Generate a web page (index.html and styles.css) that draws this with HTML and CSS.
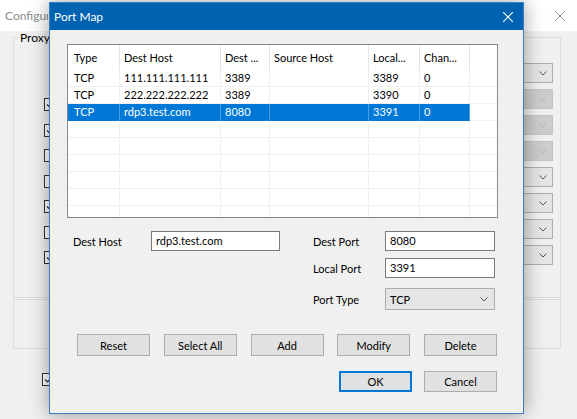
FILE: index.html
```html
<!DOCTYPE html>
<html>
<head>
<meta charset="utf-8">
<title>Port Map</title>
<link rel="stylesheet" href="styles.css">
</head>
<body>
<div class="bgwin">
  <div class="bg-title">
    <span class="bg-title-text">Configuration</span>
    <svg class="bg-close" width="10" height="10" viewBox="0 0 10 10"><path d="M0 0L10 10M10 0L0 10" stroke="#8c8c8c" stroke-width="1" fill="none"/></svg>
  </div>
  <div class="bg-body">
    <fieldset class="group">
      <legend>Proxy</legend>
      <div class="group-inner">
        <div class="checks">
          <span class="cb"><svg width="11" height="11" viewBox="0 0 11 11"><path d="M2 5.5L4.5 8L9 3" stroke="#333" stroke-width="1.2" fill="none"/></svg></span>
          <span class="cb"><svg width="11" height="11" viewBox="0 0 11 11"><path d="M2 5.5L4.5 8L9 3" stroke="#333" stroke-width="1.2" fill="none"/></svg></span>
          <span class="cb"></span>
          <span class="cb"></span>
          <span class="cb"><svg width="11" height="11" viewBox="0 0 11 11"><path d="M2 5.5L4.5 8L9 3" stroke="#333" stroke-width="1.2" fill="none"/></svg></span>
          <span class="cb"></span>
          <span class="cb"><svg width="11" height="11" viewBox="0 0 11 11"><path d="M2 5.5L4.5 8L9 3" stroke="#333" stroke-width="1.2" fill="none"/></svg></span>
        </div>
        <div class="combos">
          <span class="combo"><svg width="8" height="5" viewBox="0 0 8 5"><path d="M0.5 0.5L4 4L7.5 0.5" stroke="#555" fill="none"/></svg></span>
          <span class="combo off"><svg width="8" height="5" viewBox="0 0 8 5"><path d="M0.5 0.5L4 4L7.5 0.5" stroke="#b5b5b5" fill="none"/></svg></span>
          <span class="combo off"><svg width="8" height="5" viewBox="0 0 8 5"><path d="M0.5 0.5L4 4L7.5 0.5" stroke="#b5b5b5" fill="none"/></svg></span>
          <span class="combo off"><svg width="8" height="5" viewBox="0 0 8 5"><path d="M0.5 0.5L4 4L7.5 0.5" stroke="#b5b5b5" fill="none"/></svg></span>
          <span class="combo"><svg width="8" height="5" viewBox="0 0 8 5"><path d="M0.5 0.5L4 4L7.5 0.5" stroke="#555" fill="none"/></svg></span>
          <span class="combo"><svg width="8" height="5" viewBox="0 0 8 5"><path d="M0.5 0.5L4 4L7.5 0.5" stroke="#555" fill="none"/></svg></span>
          <span class="combo"><svg width="8" height="5" viewBox="0 0 8 5"><path d="M0.5 0.5L4 4L7.5 0.5" stroke="#555" fill="none"/></svg></span>
          <span class="combo"><svg width="8" height="5" viewBox="0 0 8 5"><path d="M0.5 0.5L4 4L7.5 0.5" stroke="#555" fill="none"/></svg></span>
        </div>
      </div>
    </fieldset>
    <div class="group2"></div>
    <span class="cb bottom-cb"><svg width="11" height="11" viewBox="0 0 11 11"><path d="M2 5.5L4.5 8L9 3" stroke="#333" stroke-width="1.2" fill="none"/></svg></span>
  </div>
</div>

<div class="dialog">
  <div class="dlg-title">
    <span>Port Map</span>
    <svg class="dlg-close" width="10" height="10" viewBox="0 0 10 10"><path d="M0 0L10 10M10 0L0 10" stroke="#fff" stroke-width="1.1" fill="none"/></svg>
  </div>
  <div class="dlg-body">
    <div class="list">
      <div class="lv-row lv-head">
        <div class="c">Type</div><div class="c">Dest Host</div><div class="c">Dest ...</div><div class="c">Source Host</div><div class="c">Local...</div><div class="c">Chan...</div><div class="c"></div>
      </div>
      <div class="lv-row">
        <div class="c">TCP</div><div class="c">111.111.111.111</div><div class="c">3389</div><div class="c"></div><div class="c">3389</div><div class="c">0</div><div class="c"></div>
      </div>
      <div class="lv-row">
        <div class="c">TCP</div><div class="c">222.222.222.222</div><div class="c">3389</div><div class="c"></div><div class="c">3390</div><div class="c">0</div><div class="c"></div>
      </div>
      <div class="lv-row sel">
        <div class="c">TCP</div><div class="c">rdp3.test.com</div><div class="c">8080</div><div class="c"></div><div class="c">3391</div><div class="c">0</div><div class="c"></div>
      </div>
      <div class="lv-row"><div class="c"></div><div class="c"></div><div class="c"></div><div class="c"></div><div class="c"></div><div class="c"></div><div class="c"></div></div>
      <div class="lv-row"><div class="c"></div><div class="c"></div><div class="c"></div><div class="c"></div><div class="c"></div><div class="c"></div><div class="c"></div></div>
      <div class="lv-row"><div class="c"></div><div class="c"></div><div class="c"></div><div class="c"></div><div class="c"></div><div class="c"></div><div class="c"></div></div>
      <div class="lv-row"><div class="c"></div><div class="c"></div><div class="c"></div><div class="c"></div><div class="c"></div><div class="c"></div><div class="c"></div></div>
      <div class="lv-row"><div class="c"></div><div class="c"></div><div class="c"></div><div class="c"></div><div class="c"></div><div class="c"></div><div class="c"></div></div>
      <div class="lv-row"><div class="c"></div><div class="c"></div><div class="c"></div><div class="c"></div><div class="c"></div><div class="c"></div><div class="c"></div></div>
    </div>

    <div class="form">
      <label class="lbl">Dest Host</label>
      <div class="input">rdp3.test.com</div>
      <div></div>
      <label class="lbl">Dest Port</label>
      <div class="input">8080</div>

      <div></div><div></div><div></div>
      <label class="lbl">Local Port</label>
      <div class="input">3391</div>

      <div></div><div></div><div></div>
      <label class="lbl r3">Port Type</label>
      <div class="select r3"><span>TCP</span><svg width="8" height="5" viewBox="0 0 8 5"><path d="M0.5 0.5L4 4L7.5 0.5" stroke="#555" fill="none"/></svg></div>
    </div>

    <div class="btns">
      <div class="btn">Reset</div>
      <div class="btn">Select All</div>
      <div class="btn">Add</div>
      <div class="btn">Modify</div>
      <div class="btn">Delete</div>
    </div>
    <div class="btns2">
      <div class="btn ok">OK</div>
      <div class="btn">Cancel</div>
    </div>
  </div>
</div>
</body>
</html>
```

FILE: styles.css
```css
* { box-sizing: border-box; }

body {
  margin: 0;
  width: 577px;
  height: 419px;
  overflow: hidden;
  position: relative;
  background: #f0f0f0;
  font-family: Lato, "Liberation Sans", sans-serif;
  font-size: 11px;
  color: #000;
}

/* background window */
.bgwin {
  height: 419px;
  display: flex;
  flex-direction: column;
}
.bg-title {
  height: 31px;
  flex: none;
  background: #fff;
  display: flex;
  align-items: center;
  justify-content: space-between;
  padding: 0 12px 0 5px;
  font-size: 12px;
  color: #8c8c8c;
}
.bg-title-text {
  width: 43px;
  overflow: hidden;
  white-space: nowrap;
}
.bg-body {
  padding: 0 16px 0 13px;
}
.group {
  margin: 0;
  padding: 0;
  height: 267px;
  border: 1px solid #dcdcdc;
  min-width: 0;
}
.group legend {
  margin-left: 4px;
  padding: 0 2px;
  font-size: 12px;
  line-height: 13px;
}
.group-inner {
  display: flex;
  justify-content: space-between;
}
.checks {
  display: flex;
  flex-direction: column;
  gap: 12.5px;
  padding: 54px 0 0 30px;
}
.cb {
  width: 13px;
  height: 13px;
  border: 1px solid #333;
  background: #fff;
  display: flex;
  align-items: center;
  justify-content: center;
}
.combos {
  display: flex;
  flex-direction: column;
  gap: 6px;
  padding: 19px 7px 0 0;
}
.combo {
  width: 82px;
  height: 20px;
  background: #e5e5e5;
  border: 1px solid #adadad;
  display: flex;
  align-items: center;
  justify-content: flex-end;
  padding-right: 5px;
}
.combo.off {
  background: #cccccc;
  border-color: #c4c4c4;
}
.group2 {
  margin-top: 1px;
  height: 50px;
  border: 1px solid #dcdcdc;
}
.bottom-cb {
  margin: 24px 0 0 29px;
}

/* dialog window */
.dialog {
  position: absolute;
  left: 49px;
  top: 2px;
  width: 475px;
  height: 412px;
  border: 1px solid #3a7ec2;
  background: #f0f0f0;
  box-shadow: 0 0 18px rgba(0, 0, 0, 0.38);
  display: flex;
  flex-direction: column;
}
.dlg-title {
  height: 27px;
  flex: none;
  background: #0063b1;
  color: #fff;
  font-size: 12px;
  display: flex;
  align-items: center;
  justify-content: space-between;
  padding: 0 10px 0 4px;
}
.dlg-body {
  padding: 14px 25px 0 17px;
}

/* list view */
.list {
  width: 431px;
  height: 174px;
  border: 1px solid #828790;
  background: #fff;
  overflow: hidden;
}
.lv-row {
  display: grid;
  grid-template-columns: 52px 101px 49px 99px 51px 50px 27px;
  height: 17px;
}
.lv-row .c {
  border-right: 1px solid #f0f0f0;
  border-bottom: 1px solid #f0f0f0;
  padding-left: 4px;
  line-height: 16px;
  white-space: nowrap;
  overflow: hidden;
}
.lv-row .c:first-child { padding-left: 6px; }
.lv-row .c:last-child { border-right: none; }
.lv-head { height: 25px; }
.lv-head .c {
  border-bottom: none;
  border-right-color: #e5e5e5;
  line-height: 25px;
}
.lv-row.sel .c {
  background: #0078d7;
  color: #fff;
  border-right-color: #4a9be0;
  border-bottom-color: #0078d7;
}
.lv-row.sel .c:last-child {
  background: #fff;
  border-bottom-color: #f0f0f0;
}

/* form */
.form {
  display: grid;
  grid-template-columns: 78px 129px 33px 72px 110px;
  row-gap: 7px;
  margin: 13px 0 0 6px;
}
.lbl {
  align-self: center;
}
.input {
  height: 20px;
  background: #fff;
  border: 1px solid #7a7a7a;
  padding-left: 4px;
  line-height: 18px;
}
.select {
  height: 22px;
  background: #e5e5e5;
  border: 1px solid #acacac;
  display: flex;
  align-items: center;
  justify-content: space-between;
  padding: 0 6px 0 4px;
}
.r3 { margin-top: 3px; }

/* buttons */
.btns {
  display: flex;
  justify-content: space-between;
  width: 420px;
  margin: 24px 0 0 10px;
}
.btns2 {
  display: flex;
  justify-content: flex-end;
  gap: 12px;
  width: 420px;
  margin: 15px 0 0 10px;
}
.btn {
  width: 73px;
  height: 22px;
  background: #e1e1e1;
  border: 1px solid #adadad;
  display: flex;
  align-items: center;
  justify-content: center;
}
.btns2 .btn { height: 21px; }
.btn.ok {
  border: 2px solid #0078d7;
}
```
